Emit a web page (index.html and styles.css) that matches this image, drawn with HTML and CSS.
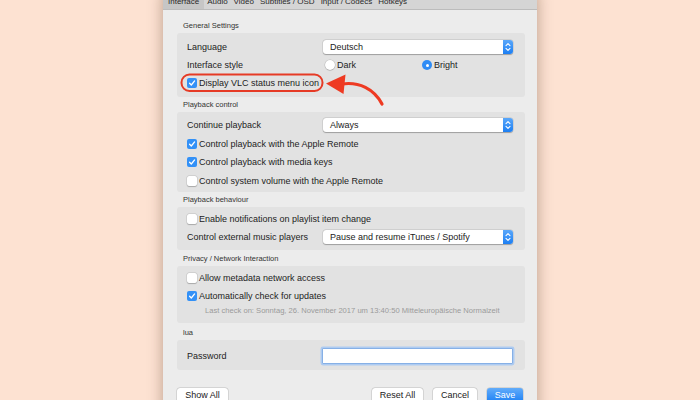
FILE: index.html
```html
<!DOCTYPE html>
<html>
<head>
<meta charset="utf-8">
<link rel="stylesheet" href="styles.css">
</head>
<body>
<div class="window">
  <div class="tabs">
    <span class="tab active">Interface</span>
    <span class="tab">Audio</span>
    <span class="tab">Video</span>
    <span class="tab">Subtitles / OSD</span>
    <span class="tab">Input / Codecs</span>
    <span class="tab">Hotkeys</span>
  </div>
  <div class="content">
    <section class="sec">
      <div class="sec-title">General Settings</div>
      <div class="group g1">
        <div class="row">
          <span class="lbl">Language</span>
          <div class="popup"><span class="pv">Deutsch</span><span class="stepper"><svg width="10" height="14" viewBox="0 0 10 14"><path d="M3 5.6 L5 3.6 L7 5.6 M3 8.4 L5 10.4 L7 8.4" fill="none" stroke="#fff" stroke-width="1.1" stroke-linecap="round" stroke-linejoin="round"/></svg></span></div>
        </div>
        <div class="row">
          <span class="lbl">Interface style</span>
          <div class="radios">
            <span class="radio"><span class="rb"></span>Dark</span>
            <span class="radio"><span class="rb on"></span>Bright</span>
          </div>
        </div>
        <div class="row crow">
          <span class="cb on"><svg width="10" height="10" viewBox="0 0 10 10"><path d="M2.6 5.2 L4.3 7 L7.6 2.9" fill="none" stroke="#fff" stroke-width="1.3" stroke-linecap="round" stroke-linejoin="round"/></svg></span>Display VLC status menu icon
        </div>
      </div>
    </section>

    <section class="sec s2">
      <div class="sec-title">Playback control</div>
      <div class="group g2">
        <div class="row">
          <span class="lbl">Continue playback</span>
          <div class="popup"><span class="pv">Always</span><span class="stepper"><svg width="10" height="14" viewBox="0 0 10 14"><path d="M3 5.6 L5 3.6 L7 5.6 M3 8.4 L5 10.4 L7 8.4" fill="none" stroke="#fff" stroke-width="1.1" stroke-linecap="round" stroke-linejoin="round"/></svg></span></div>
        </div>
        <div class="row crow">
          <span class="cb on"><svg width="10" height="10" viewBox="0 0 10 10"><path d="M2.6 5.2 L4.3 7 L7.6 2.9" fill="none" stroke="#fff" stroke-width="1.3" stroke-linecap="round" stroke-linejoin="round"/></svg></span>Control playback with the Apple Remote
        </div>
        <div class="row crow">
          <span class="cb on"><svg width="10" height="10" viewBox="0 0 10 10"><path d="M2.6 5.2 L4.3 7 L7.6 2.9" fill="none" stroke="#fff" stroke-width="1.3" stroke-linecap="round" stroke-linejoin="round"/></svg></span>Control playback with media keys
        </div>
        <div class="row crow">
          <span class="cb"></span>Control system volume with the Apple Remote
        </div>
      </div>
    </section>

    <section class="sec s3">
      <div class="sec-title">Playback behaviour</div>
      <div class="group g3">
        <div class="row crow">
          <span class="cb"></span>Enable notifications on playlist item change
        </div>
        <div class="row">
          <span class="lbl">Control external music players</span>
          <div class="popup"><span class="pv">Pause and resume iTunes / Spotify</span><span class="stepper"><svg width="10" height="14" viewBox="0 0 10 14"><path d="M3 5.6 L5 3.6 L7 5.6 M3 8.4 L5 10.4 L7 8.4" fill="none" stroke="#fff" stroke-width="1.1" stroke-linecap="round" stroke-linejoin="round"/></svg></span></div>
        </div>
      </div>
    </section>

    <section class="sec s4">
      <div class="sec-title">Privacy / Network Interaction</div>
      <div class="group g4">
        <div class="row crow">
          <span class="cb"></span>Allow metadata network access
        </div>
        <div class="row crow">
          <span class="cb on"><svg width="10" height="10" viewBox="0 0 10 10"><path d="M2.6 5.2 L4.3 7 L7.6 2.9" fill="none" stroke="#fff" stroke-width="1.3" stroke-linecap="round" stroke-linejoin="round"/></svg></span>Automatically check for updates
        </div>
        <div class="lastcheck">Last check on: Sonntag, 26. November 2017 um 13:40:50 Mitteleuropäische Normalzeit</div>
      </div>
    </section>

    <section class="sec s5">
      <div class="sec-title">lua</div>
      <div class="group g5">
        <div class="row prow">
          <span class="lbl">Password</span>
          <span class="pwd"></span>
        </div>
      </div>
    </section>

    <div class="footer">
      <span class="btn b-show">Show All</span>
      <span class="spacer"></span>
      <span class="btn b-reset">Reset All</span>
      <span class="btn b-cancel">Cancel</span>
      <span class="btn b-save">Save</span>
    </div>
  </div>
</div>

<svg class="annot" width="700" height="400" viewBox="0 0 700 400">
  <rect x="181.5" y="74.5" width="141" height="16.5" rx="8" fill="none" stroke="#e63a25" stroke-width="2"/>
  <path d="M342 84 C 359 81.5, 374 89, 382 104" fill="none" stroke="#ee3a22" stroke-width="3.2" stroke-linecap="round"/>
  <polygon points="326,83.5 345.5,74.5 343.5,94" fill="#ee3a22"/>
</svg>
</body>
</html>
```

FILE: styles.css
```css
html, body {
  margin: 0;
  padding: 0;
}
body {
  width: 700px;
  height: 400px;
  overflow: hidden;
  background: #fde2d2;
  font-family: "Liberation Sans", Arial, sans-serif;
  color: #222;
  position: relative;
}
.window {
  margin-left: 163px;
  margin-top: -8px;
  width: 374px;
  height: 430px;
  background: #ececec;
  box-shadow: 0 0 14px rgba(60, 30, 10, 0.35);
}
.tabs {
  height: 17px;
  background: #d5d5d5;
  border-bottom: 1px solid #bcbcbc;
  display: flex;
  align-items: flex-end;
  font-size: 8px;
  color: #2a2a2a;
  gap: 6px;
}
.tab {
  line-height: 10px;
  height: 10px;
  padding-bottom: 2px;
}
.tab.active {
  background: #c6c6c6;
  padding: 5px 5px 2px 5px;
  margin-right: -3px;
}
.content {
  padding: 12px 12px 0 14px;
}
.sec-title {
  height: 8px;
  line-height: 8px;
  font-size: 7.5px;
  color: #333;
  padding-left: 6px;
  margin-bottom: 3px;
}
.s2, .s3 { margin-top: 4px; }
.s4 { margin-top: 5px; }
.s5 { margin-top: 6px; }
.group {
  background: #e2e2e2;
  border-radius: 3px;
  padding: 5px 12px 5px 10px;
}
.g2 { padding: 4px 12px 2px 10px; }
.g2 .row { height: 18.5px; }
.g3 { padding: 3px 12px 4px 10px; }
.g4 { padding: 3px 12px 7px 10px; }
.g5 { padding: 5px 12px 3px 10px; }
.row {
  height: 18px;
  display: flex;
  align-items: center;
  font-size: 9px;
}
.lbl {
  width: 136px;
  flex: none;
}
.popup {
  flex: 1;
  height: 14px;
  background: #fff;
  border-radius: 3px;
  box-shadow: 0 0 0 0.5px rgba(0,0,0,0.12), 0 0.5px 1px rgba(0,0,0,0.25);
  display: flex;
  align-items: center;
}
.pv {
  flex: 1;
  padding-left: 7px;
  font-size: 9px;
  color: #222;
}
.stepper {
  width: 10px;
  height: 14px;
  background: linear-gradient(#5aa7fa, #1d7ff3);
  border-radius: 0 3px 3px 0;
  display: flex;
}
.radios {
  display: flex;
}
.radio {
  width: 95px;
  display: flex;
  align-items: center;
  padding-left: 2px;
}
.rb {
  width: 10px;
  height: 10px;
  border-radius: 50%;
  background: #fff;
  box-shadow: 0 0 0 0.5px rgba(0,0,0,0.15), 0 0.5px 1px rgba(0,0,0,0.2);
  margin-right: 2px;
  box-sizing: border-box;
  position: relative;
}
.rb.on {
  background: #2f8cf5;
  box-shadow: none;
}
.rb.on::after {
  content: "";
  position: absolute;
  left: 3.5px;
  top: 3.5px;
  width: 3px;
  height: 3px;
  border-radius: 50%;
  background: #fff;
}
.cb {
  width: 10px;
  height: 10px;
  border-radius: 2px;
  background: #fff;
  box-shadow: 0 0 0 0.5px rgba(0,0,0,0.12), 0 0.5px 1px rgba(0,0,0,0.2);
  margin-right: 2px;
  flex: none;
  display: flex;
}
.cb.on {
  background: #3391f7;
  box-shadow: none;
}
.lastcheck {
  height: 11px;
  line-height: 11px;
  font-size: 7.6px;
  color: #9a9a9a;
  padding-left: 18px;
  white-space: nowrap;
}
.prow {
  height: 22px;
}
.prow .lbl {
  width: 135px;
}
.pwd {
  flex: 1;
  height: 14px;
  background: #fff;
  border: 1px solid #86b0e6;
  box-shadow: 0 0 0 1.5px #aecbf1;
  border-radius: 1px;
}
.footer {
  margin-top: 18px;
  display: flex;
  padding-right: 2px;
  gap: 10px;
}
.spacer { flex: 1; }
.btn {
  height: 15px;
  line-height: 15px;
  font-size: 9px;
  text-align: center;
  background: #fff;
  border-radius: 3px;
  box-shadow: 0 0 0 0.5px rgba(0,0,0,0.15), 0 0.5px 1px rgba(0,0,0,0.25);
  color: #222;
}
.b-show { width: 51px; }
.b-reset { width: 51px; }
.b-cancel { width: 44px; }
.b-save {
  width: 36px;
  color: #fff;
  background: linear-gradient(#62acfa, #1a7ef4);
}
.annot {
  position: absolute;
  left: 0;
  top: 0;
  pointer-events: none;
}
```
